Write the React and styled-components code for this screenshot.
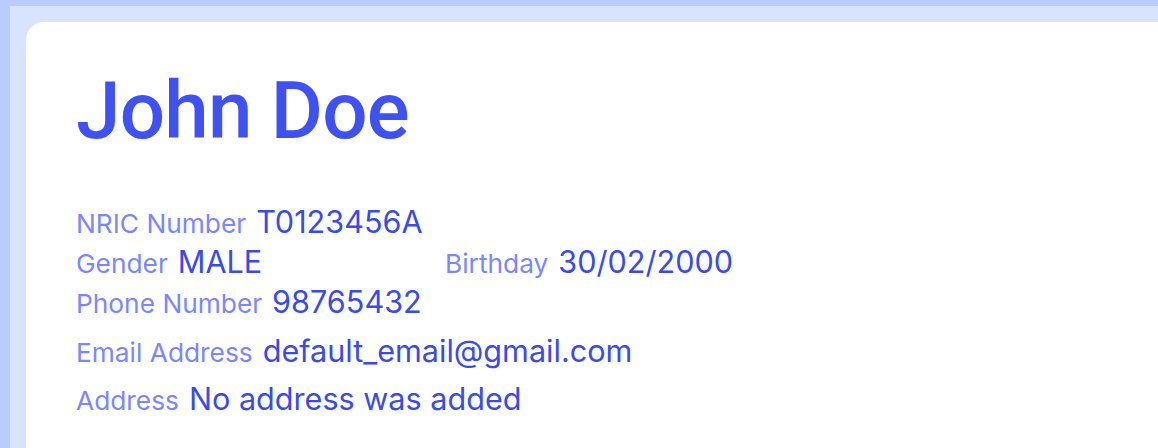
import React from 'react';
import styled, { createGlobalStyle } from 'styled-components';

const GlobalStyle = createGlobalStyle`
  html, body {
    margin: 0;
    padding: 0;
    background: #b9cbff;
  }
`;

const Frame = styled.div`
  height: 448px;
  padding: 6px 0 0 10px;
  box-sizing: border-box;
  overflow: hidden;
`;

const Panel = styled.div`
  background: #d8e3ff;
  height: 100%;
  padding: 16px 0 0 16px;
  box-sizing: border-box;
`;

const Card = styled.div`
  background: #ffffff;
  height: 100%;
  border-radius: 18px 0 0 0;
  padding: 41px 50px 0 50px;
  box-sizing: border-box;
`;

const Name = styled.h1`
  margin: 0 0 43px 0;
  font-family: Roboto, "Noto Sans", sans-serif;
  font-weight: 500;
  font-size: 80px;
  line-height: 96px;
  letter-spacing: -0.8px;
  color: #3f51f2;
`;

const Fields = styled.div`
  display: grid;
  grid-template-columns: 369px auto;
  justify-content: start;
`;

const Field = styled.div`
  display: flex;
  align-items: baseline;
  gap: 10px;
  height: ${(p) => p.h || 40}px;
  line-height: 40px;
  grid-column: ${(p) => (p.wide ? '1 / -1' : 'auto')};
  font-family: Inter, "Noto Sans", sans-serif;
`;

const Label = styled.span`
  font-size: 26.3px;
  color: #7b87ff;
`;

const Value = styled.span`
  font-size: 30.6px;
  color: #3a4be8;
`;

export default function App() {
  return (
    <Frame>
      <GlobalStyle />
      <Panel>
        <Card>
          <Name>John Doe</Name>
          <Fields>
            <Field wide>
              <Label>NRIC Number</Label>
              <Value>T0123456A</Value>
            </Field>
            <Field>
              <Label>Gender</Label>
              <Value>MALE</Value>
            </Field>
            <Field>
              <Label>Birthday</Label>
              <Value>30/02/2000</Value>
            </Field>
            <Field wide h={49}>
              <Label>Phone Number</Label>
              <Value>98765432</Value>
            </Field>
            <Field wide h={48}>
              <Label>Email Address</Label>
              <Value>default_email@gmail.com</Value>
            </Field>
            <Field wide>
              <Label>Address</Label>
              <Value>No address was added</Value>
            </Field>
          </Fields>
        </Card>
      </Panel>
    </Frame>
  );
}
